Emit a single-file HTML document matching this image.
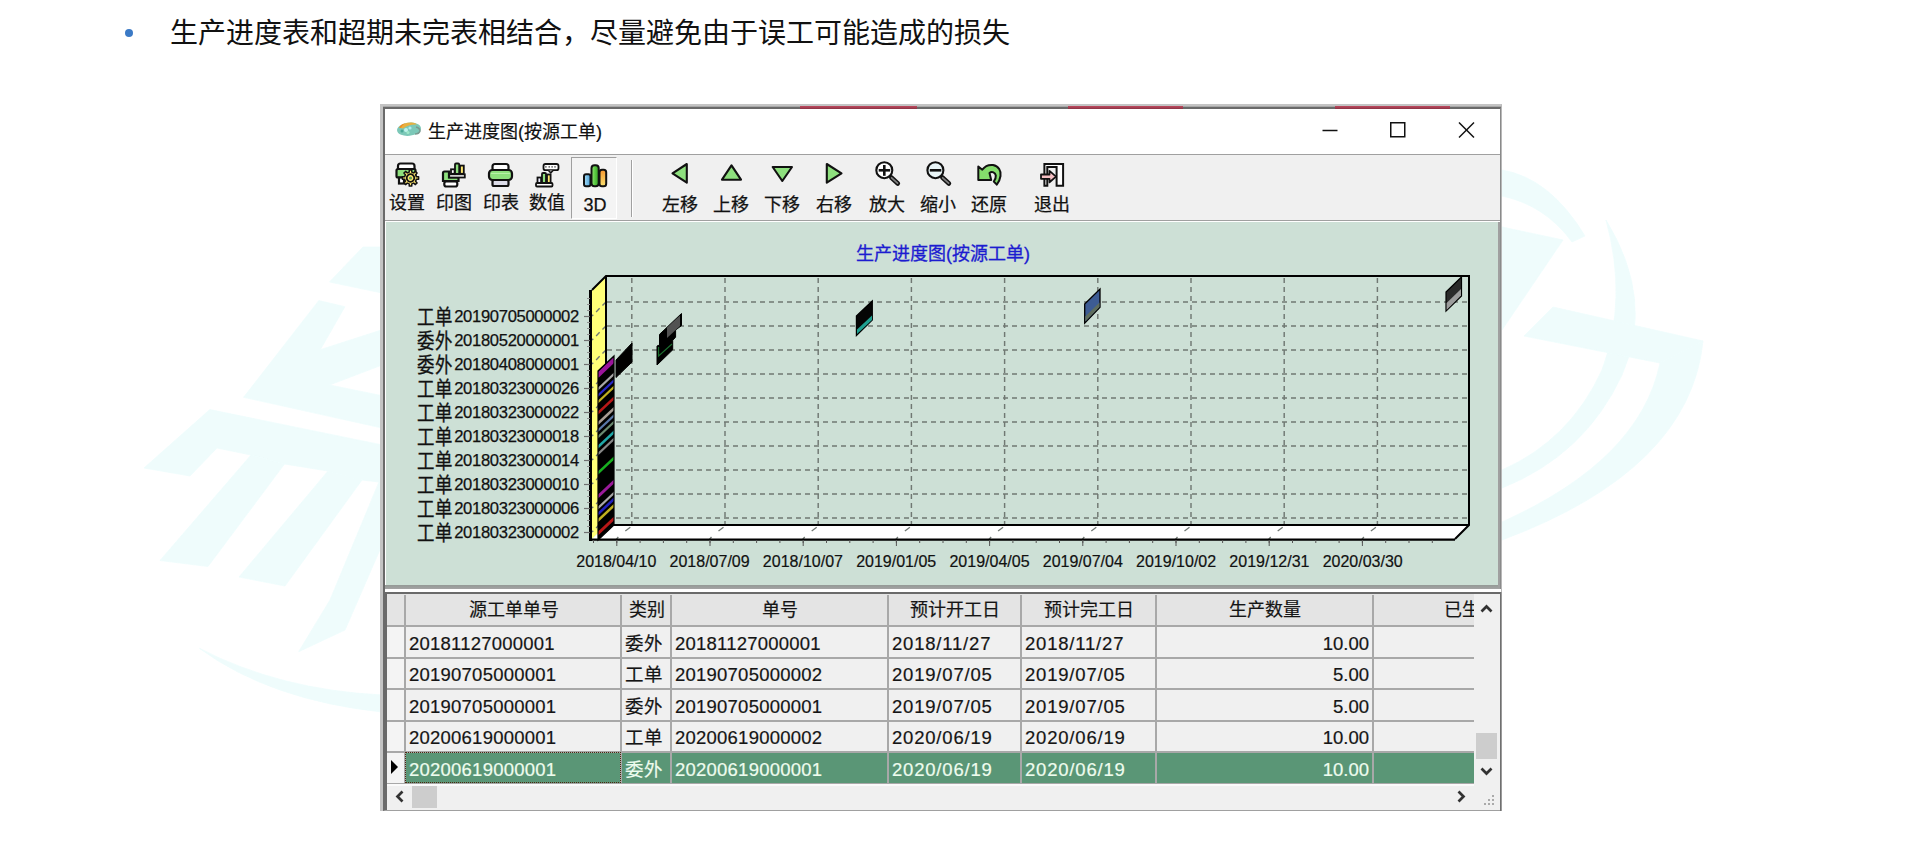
<!DOCTYPE html>
<html lang="zh-CN"><head><meta charset="utf-8">
<style>
*{margin:0;padding:0;box-sizing:border-box}
html,body{width:1920px;height:847px;overflow:hidden;background:#fff;font-family:"Liberation Sans",sans-serif;color:#000}
.a{position:absolute}
.nw{white-space:nowrap}
.bt{position:absolute;font-size:18px;line-height:20px;white-space:nowrap;color:#111;text-align:center;-webkit-text-stroke:0.25px #111}
.cell{position:absolute;font-size:18.5px;line-height:31px;white-space:nowrap;color:#151515;-webkit-text-stroke:0.2px #151515}
.hd{position:absolute;font-size:18px;line-height:31px;white-space:nowrap;color:#151515;text-align:center;-webkit-text-stroke:0.2px #151515}
</style></head><body>

<svg class="a" style="left:0;top:0" width="1920" height="847">
<g fill="#effcfc" stroke="#effcfc" stroke-width="0.8">
<path d="M329.5 282 L363 247 L382 247 L382 293 Z"/>
<path d="M243.6 397.3 L318.8 300.6 L344.9 306.7 L320.3 349.7 L382 329.8 L382 365 L329.5 385 L382 395.7 L382 428 Z"/>
<path d="M144 468 L209.8 409.6 L382 444.9 L382 483 L379 482 L362 480 L328 471 L284.5 464 L251 455 L217 448 L190 476 Z"/>
<path d="M251 455 L284.5 464 L208 566.5 L160 560.5 Z"/>
<path d="M328 471 L362 480 L285 586 L239 577 Z"/>
<path d="M379 482 L382 482.5 L382 545 L345 630 L298.7 651.7 L330 600 Z"/>
<path d="M199.5 648.4 Q280 690 382 695 L382 712 Q270 700 199.5 648.4 Z"/>
<path d="M1502 170 Q1550 178 1585 236 L1572 242 Q1545 205 1502 196 Z"/>
<path d="M1606 220 Q1655 300 1622 375 Q1585 455 1502 488 L1502 470 Q1570 440 1602 370 Q1628 300 1606 220 Z"/>
<path d="M1524 336 L1553 307 L1703 341 L1660 363 Z"/>
<path d="M1703 341 Q1690 470 1502 540 L1502 522 Q1640 460 1660 363 Z"/>
<path d="M1502 227 L1563 240 L1502 330 Z"/>
</g>
</svg>
<div class="a" style="left:125px;top:29px;width:8px;height:8px;border-radius:50%;background:#3b7ac6"></div>
<div class="a nw" style="left:170px;top:16px;font-size:28px;line-height:36px;color:#111">生产进度表和超期未完表相结合，尽量避免由于误工可能造成的损失</div>
<div class="a" style="left:380px;top:104px;width:1122px;height:707px;background:#fff;border-left:3px solid #c4c4c4;border-top:2px solid #c4c4c4;border-right:1px solid #b8b8b8"></div>
<div class="a" style="left:383px;top:106px;width:1118px;height:1px;background:#a8a8a8"></div>
<div class="a" style="left:383px;top:107px;width:1118px;height:704px;border-left:2px solid #6a6a6a;border-top:2px solid #6a6a6a;border-right:1px solid #8a8a8a;border-bottom:1px solid #a0a0a0"></div>
<div class="a" style="left:800px;top:106px;width:117px;height:3px;background:linear-gradient(#c04a60,#8a3444)"></div>
<div class="a" style="left:1068px;top:106px;width:115px;height:3px;background:linear-gradient(#c04a60,#8a3444)"></div>
<div class="a" style="left:1335px;top:106px;width:115px;height:3px;background:linear-gradient(#c04a60,#8a3444)"></div>
<svg class="a" style="left:395px;top:119px" width="30" height="22" viewBox="0 0 30 22">
<ellipse cx="14" cy="10.2" rx="12" ry="6.6" fill="#7cc8b8" transform="rotate(-6 14 10.2)"/>
<path d="M4 8.5 Q8 3.2 17 3.6 Q21 4 22 5.5 Q14 5 8 9.5 Z" fill="#e8b040"/>
<path d="M4 8.5 Q6 5 10 4.2 Q7 6.5 6 9 Z" fill="#f08a20"/>
<circle cx="11" cy="11" r="2" fill="#c0f4ec"/><circle cx="15" cy="9" r="1.6" fill="#b0ecf0"/>
<circle cx="13" cy="13.5" r="1.5" fill="#9ee8c8"/><circle cx="7" cy="12" r="1.5" fill="#4aa898"/>
<path d="M21 8 Q25 9 25 12 Q24 15 20 15" fill="none" stroke="#7a9a90" stroke-width="1.6"/>
</svg>
<div class="a nw" style="left:428px;top:121px;font-size:18px;line-height:22px;color:#111;-webkit-text-stroke:0.2px #111">生产进度图(按源工单)</div>
<svg class="a" style="left:1300px;top:110px" width="200" height="44">
<line x1="22.5" y1="20.5" x2="37.5" y2="20.5" stroke="#111" stroke-width="1.5"/>
<rect x="90.75" y="12.75" width="14" height="14" fill="none" stroke="#111" stroke-width="1.5"/>
<line x1="159" y1="12.5" x2="174" y2="27.5" stroke="#111" stroke-width="1.5"/>
<line x1="174" y1="12.5" x2="159" y2="27.5" stroke="#111" stroke-width="1.5"/>
</svg>
<div class="a" style="left:385px;top:154px;width:1115px;height:67px;background:#f0f0f0;border-top:1px solid #a0a0a0;border-bottom:1px solid #a0a0a0"></div>
<div class="a" style="left:571px;top:157px;width:46px;height:62px;background:#f4f4f4;border-left:1px solid #a0a0a0;border-top:1px solid #a0a0a0;border-right:1px solid #fff;border-bottom:1px solid #fff"></div>
<div class="a" style="left:631px;top:160px;width:1px;height:57px;background:#a0a0a0"></div>
<div class="a" style="left:632px;top:160px;width:1px;height:57px;background:#fff"></div>
<div class="bt" style="left:377px;top:193px;width:60px">设置</div>
<div class="bt" style="left:424px;top:193px;width:60px">印图</div>
<div class="bt" style="left:471px;top:193px;width:60px">印表</div>
<div class="bt" style="left:517px;top:193px;width:60px">数值</div>
<div class="bt" style="left:565px;top:195px;width:60px">3D</div>
<div class="bt" style="left:650px;top:195px;width:60px">左移</div>
<div class="bt" style="left:701px;top:195px;width:60px">上移</div>
<div class="bt" style="left:752px;top:195px;width:60px">下移</div>
<div class="bt" style="left:804px;top:195px;width:60px">右移</div>
<div class="bt" style="left:857px;top:195px;width:60px">放大</div>
<div class="bt" style="left:908px;top:195px;width:60px">缩小</div>
<div class="bt" style="left:959px;top:195px;width:60px">还原</div>
<div class="bt" style="left:1022px;top:195px;width:60px">退出</div>
<svg class="a" style="left:0;top:0" width="1100" height="230">
<path d="M398 169 V166 Q398 163.5 400.5 163.5 H412 Q414.5 163.5 414.5 166 V169" fill="#fff" stroke="#111" stroke-width="2.2"/>
<rect x="396.5" y="169" width="19" height="8.5" rx="1.5" fill="#8ee07e" stroke="#111" stroke-width="2.2"/>
<rect x="399" y="177.5" width="5" height="6" fill="#fff" stroke="#111" stroke-width="2.2"/>
<g transform="translate(410.5,178)">
<path d="M5.85 -1.34 L8.11 -1.20 L8.11 1.20 L5.85 1.34 L5.08 3.19 L6.59 4.88 L4.88 6.59 L3.19 5.08 L1.34 5.85 L1.20 8.11 L-1.20 8.11 L-1.34 5.85 L-3.19 5.08 L-4.88 6.59 L-6.59 4.88 L-5.08 3.19 L-5.85 1.34 L-8.11 1.20 L-8.11 -1.20 L-5.85 -1.34 L-5.08 -3.19 L-6.59 -4.88 L-4.88 -6.59 L-3.19 -5.08 L-1.34 -5.85 L-1.20 -8.11 L1.20 -8.11 L1.34 -5.85 L3.19 -5.08 L4.88 -6.59 L6.59 -4.88 L5.08 -3.19 Z" fill="#ffe870" stroke="#111" stroke-width="1.5" stroke-linejoin="round"/>
<circle r="3.8" fill="#ffe870" stroke="#111" stroke-width="1.8"/>
<circle r="1.6" fill="#5a9a5a"/>
</g>
<rect x="451" y="169.3" width="3.6" height="4.5" fill="#fff" stroke="#111" stroke-width="1.8"/>
<rect x="455" y="163.5" width="4.2" height="10.3" rx="1" fill="#8ee07e" stroke="#111" stroke-width="1.8"/>
<rect x="460" y="165.6" width="3.8" height="8.2" fill="#ffe870" stroke="#111" stroke-width="1.8"/>
<path d="M443 181 V173 Q443 171.5 444.5 171.5 H449 V177.5 H458.5 V181 Z" fill="#8ee07e" stroke="#111" stroke-width="2.2"/>
<rect x="449.2" y="174.3" width="15.6" height="3.2" fill="#fff" stroke="#111" stroke-width="1.8"/>
<rect x="444.3" y="181.5" width="13" height="5" rx="2" fill="#fff" stroke="#111" stroke-width="2.2"/>
<rect x="492.5" y="164" width="16" height="7" rx="2.5" fill="#fff" stroke="#111" stroke-width="2.2"/>
<rect x="489" y="170" width="23" height="10" rx="3.5" fill="#8ee07e" stroke="#111" stroke-width="2.2"/>
<line x1="491" y1="173.5" x2="510" y2="173.5" stroke="#b8f0a8" stroke-width="1"/>
<rect x="492.5" y="180" width="16" height="6" rx="1.5" fill="#dcdce8" stroke="#111" stroke-width="2.2"/>
<rect x="543.5" y="164" width="15" height="6.2" rx="2" fill="#fff" stroke="#111" stroke-width="1.8"/>
<path d="M548.5 170.5 L550.8 172.8 L553 170.5" fill="#fff" stroke="#111" stroke-width="1.6"/>
<g fill="#111"><rect x="545.3" y="166.3" width="1.2" height="1.2"/><rect x="548.6" y="166.3" width="1.2" height="1.2"/><rect x="551.5" y="166.3" width="1.2" height="1.2"/><rect x="554.4" y="166.3" width="1.2" height="1.2"/></g>
<rect x="537.5" y="177.5" width="3.6" height="5.5" fill="#eef" stroke="#111" stroke-width="1.8"/>
<rect x="542" y="173" width="4" height="10" rx="1" fill="#8ee07e" stroke="#111" stroke-width="1.8"/>
<rect x="547" y="174.5" width="3.6" height="8.5" fill="#ffe870" stroke="#111" stroke-width="1.8"/>
<rect x="536" y="183" width="16.5" height="3.5" rx="1" fill="#fff" stroke="#111" stroke-width="1.8"/>
<defs>
<linearGradient id="gb" x1="0" x2="1"><stop offset="0" stop-color="#a8dcf4"/><stop offset="1" stop-color="#4aa0d8"/></linearGradient>
<linearGradient id="gg" x1="0" x2="1"><stop offset="0" stop-color="#98e878"/><stop offset=".5" stop-color="#58c840"/><stop offset="1" stop-color="#38a028"/></linearGradient>
<linearGradient id="go" x1="0" x2="0" y1="0" y2="1"><stop offset="0" stop-color="#f89830"/><stop offset="1" stop-color="#f8e070"/></linearGradient>
</defs>
<rect x="584" y="174.3" width="6.5" height="12" rx="2" fill="url(#gb)" stroke="#111" stroke-width="2"/>
<rect x="591.5" y="165.2" width="7.2" height="21.1" rx="3" fill="url(#gg)" stroke="#111" stroke-width="2"/>
<rect x="599.5" y="169.8" width="6.7" height="16.5" rx="2.5" fill="url(#go)" stroke="#111" stroke-width="2"/>
<path d="M672.5 173.3 L686.8 164 V182.7 Z" fill="#8ee07e" stroke="#111" stroke-width="2.1" stroke-linejoin="round"/>
<path d="M731.5 165.3 L741 179.7 H722 Z" fill="#8ee07e" stroke="#111" stroke-width="2.1" stroke-linejoin="round"/>
<path d="M782.3 181 L792 167 H772.7 Z" fill="#8ee07e" stroke="#111" stroke-width="2.1" stroke-linejoin="round"/>
<path d="M841.5 173.3 L826.8 164 V182.7 Z" fill="#8ee07e" stroke="#111" stroke-width="2.1" stroke-linejoin="round"/>
<line x1="891.3" y1="177.5" x2="897.8" y2="183.5" stroke="#111" stroke-width="4.6" stroke-linecap="round"/>
<line x1="891.5999999999999" y1="177.8" x2="897.5" y2="183.2" stroke="#808080" stroke-width="1.8" stroke-linecap="round"/>
<circle cx="884.3" cy="170.2" r="8" fill="#fff" stroke="#111" stroke-width="2.1"/>
<rect x="878.6999999999999" y="169" width="11.5" height="2.6" fill="#111"/>
<rect x="883.0" y="165" width="2.6" height="10.8" fill="#111"/>
<line x1="942.4" y1="177.5" x2="948.9" y2="183.5" stroke="#111" stroke-width="4.6" stroke-linecap="round"/>
<line x1="942.6999999999999" y1="177.8" x2="948.6" y2="183.2" stroke="#808080" stroke-width="1.8" stroke-linecap="round"/>
<circle cx="935.4" cy="170.2" r="8" fill="#eaf6f8" stroke="#111" stroke-width="2.1"/>
<rect x="929.8" y="169" width="11.5" height="2.6" fill="#111"/>
<path d="M978.3 166.5 L982.3 169.7 C985 166 989 164.5 993 165 C998.5 166 1001.5 171 1000.5 176 C1000 179.5 998.5 182.5 996.8 184.6 L993.8 181.5 C995.3 179.5 996 177.5 995.8 175.5 C995.3 172.5 992 171 989.5 173 L991.2 180 H978.3 Z" fill="#84dc6c" stroke="#111" stroke-width="2" stroke-linejoin="round"/>
<path d="M1044.4 164.1 H1063.1 V185.7 H1056.6 V166.9 H1047.3 V185.7 H1044.4 Z" fill="#fff" stroke="#111" stroke-width="2" stroke-linejoin="miter"/>
<path d="M1041 174.5 H1049.5 V170.8 L1056 176.6 L1049.5 182.3 V178.8 H1041 Z" fill="#f6c0c4" stroke="#111" stroke-width="1.8" stroke-linejoin="round"/>
</svg>
<div class="a" style="left:385px;top:221px;width:1115px;height:368px;background:#fff"></div>
<div class="a" style="left:386px;top:222px;width:1113px;height:363px;background:#cde0d6"></div>
<div class="a" style="left:385px;top:585px;width:1115px;height:4px;background:linear-gradient(#949a96,#a4a4a4)"></div>
<div class="a" style="left:1498px;top:222px;width:2px;height:366px;background:#a0a0a0"></div>
<svg class="a" style="left:0;top:0" width="1920" height="847">
<text x="943" y="260" font-size="18" fill="#1c1cd0" text-anchor="middle" font-family="Liberation Sans" stroke="#1c1cd0" stroke-width="0.3">生产进度图(按源工单)</text>
<line x1="607" y1="302" x2="1468" y2="302" stroke="#707873" stroke-width="1.45" stroke-dasharray="5 4"/>
<line x1="607" y1="326" x2="1468" y2="326" stroke="#707873" stroke-width="1.45" stroke-dasharray="5 4"/>
<line x1="607" y1="350" x2="1468" y2="350" stroke="#707873" stroke-width="1.45" stroke-dasharray="5 4"/>
<line x1="607" y1="374" x2="1468" y2="374" stroke="#707873" stroke-width="1.45" stroke-dasharray="5 4"/>
<line x1="607" y1="398" x2="1468" y2="398" stroke="#707873" stroke-width="1.45" stroke-dasharray="5 4"/>
<line x1="607" y1="422" x2="1468" y2="422" stroke="#707873" stroke-width="1.45" stroke-dasharray="5 4"/>
<line x1="607" y1="446" x2="1468" y2="446" stroke="#707873" stroke-width="1.45" stroke-dasharray="5 4"/>
<line x1="607" y1="470" x2="1468" y2="470" stroke="#707873" stroke-width="1.45" stroke-dasharray="5 4"/>
<line x1="607" y1="494" x2="1468" y2="494" stroke="#707873" stroke-width="1.45" stroke-dasharray="5 4"/>
<line x1="607" y1="518" x2="1468" y2="518" stroke="#707873" stroke-width="1.45" stroke-dasharray="5 4"/>
<line x1="631.8" y1="278" x2="631.8" y2="525" stroke="#707873" stroke-width="1.45" stroke-dasharray="5 4"/>
<line x1="725.0" y1="278" x2="725.0" y2="525" stroke="#707873" stroke-width="1.45" stroke-dasharray="5 4"/>
<line x1="818.2" y1="278" x2="818.2" y2="525" stroke="#707873" stroke-width="1.45" stroke-dasharray="5 4"/>
<line x1="911.4" y1="278" x2="911.4" y2="525" stroke="#707873" stroke-width="1.45" stroke-dasharray="5 4"/>
<line x1="1004.6" y1="278" x2="1004.6" y2="525" stroke="#707873" stroke-width="1.45" stroke-dasharray="5 4"/>
<line x1="1097.8" y1="278" x2="1097.8" y2="525" stroke="#707873" stroke-width="1.45" stroke-dasharray="5 4"/>
<line x1="1191.0" y1="278" x2="1191.0" y2="525" stroke="#707873" stroke-width="1.45" stroke-dasharray="5 4"/>
<line x1="1284.2" y1="278" x2="1284.2" y2="525" stroke="#707873" stroke-width="1.45" stroke-dasharray="5 4"/>
<line x1="1377.4" y1="278" x2="1377.4" y2="525" stroke="#707873" stroke-width="1.45" stroke-dasharray="5 4"/>
<path d="M592 290 L606 276 L606 525 L592 539 Z" fill="#ffff78"/>
<line x1="606" y1="302" x2="592" y2="316" stroke="#707873" stroke-width="1.4" stroke-dasharray="5 4"/>
<line x1="606" y1="326" x2="592" y2="340" stroke="#707873" stroke-width="1.4" stroke-dasharray="5 4"/>
<line x1="606" y1="350" x2="592" y2="364" stroke="#707873" stroke-width="1.4" stroke-dasharray="5 4"/>
<line x1="606" y1="374" x2="592" y2="388" stroke="#707873" stroke-width="1.4" stroke-dasharray="5 4"/>
<line x1="606" y1="398" x2="592" y2="412" stroke="#707873" stroke-width="1.4" stroke-dasharray="5 4"/>
<line x1="606" y1="422" x2="592" y2="436" stroke="#707873" stroke-width="1.4" stroke-dasharray="5 4"/>
<line x1="606" y1="446" x2="592" y2="460" stroke="#707873" stroke-width="1.4" stroke-dasharray="5 4"/>
<line x1="606" y1="470" x2="592" y2="484" stroke="#707873" stroke-width="1.4" stroke-dasharray="5 4"/>
<line x1="606" y1="494" x2="592" y2="508" stroke="#707873" stroke-width="1.4" stroke-dasharray="5 4"/>
<line x1="606" y1="518" x2="592" y2="532" stroke="#707873" stroke-width="1.4" stroke-dasharray="5 4"/>
<path d="M592 539 L606 525 L1468 525 L1455 539 Z" fill="#fff"/>
<line x1="630.3" y1="527.3" x2="625.3" y2="531" stroke="#707873" stroke-width="1.3"/>
<line x1="618.3" y1="537" x2="615.8" y2="540" stroke="#707873" stroke-width="1.3"/>
<line x1="723.5" y1="527.3" x2="718.5" y2="531" stroke="#707873" stroke-width="1.3"/>
<line x1="711.5" y1="537" x2="709.0" y2="540" stroke="#707873" stroke-width="1.3"/>
<line x1="816.7" y1="527.3" x2="811.7" y2="531" stroke="#707873" stroke-width="1.3"/>
<line x1="804.7" y1="537" x2="802.2" y2="540" stroke="#707873" stroke-width="1.3"/>
<line x1="909.9" y1="527.3" x2="904.9" y2="531" stroke="#707873" stroke-width="1.3"/>
<line x1="897.9" y1="537" x2="895.4" y2="540" stroke="#707873" stroke-width="1.3"/>
<line x1="1003.1" y1="527.3" x2="998.1" y2="531" stroke="#707873" stroke-width="1.3"/>
<line x1="991.1" y1="537" x2="988.6" y2="540" stroke="#707873" stroke-width="1.3"/>
<line x1="1096.3" y1="527.3" x2="1091.3" y2="531" stroke="#707873" stroke-width="1.3"/>
<line x1="1084.3" y1="537" x2="1081.8" y2="540" stroke="#707873" stroke-width="1.3"/>
<line x1="1189.5" y1="527.3" x2="1184.5" y2="531" stroke="#707873" stroke-width="1.3"/>
<line x1="1177.5" y1="537" x2="1175.0" y2="540" stroke="#707873" stroke-width="1.3"/>
<line x1="1282.7" y1="527.3" x2="1277.7" y2="531" stroke="#707873" stroke-width="1.3"/>
<line x1="1270.7" y1="537" x2="1268.2" y2="540" stroke="#707873" stroke-width="1.3"/>
<line x1="1375.9" y1="527.3" x2="1370.9" y2="531" stroke="#707873" stroke-width="1.3"/>
<line x1="1363.9" y1="537" x2="1361.4" y2="540" stroke="#707873" stroke-width="1.3"/>
<path d="M592 290 L606 276 L1469 276 L1469 525 L1455 539" fill="none" stroke="#000" stroke-width="2"/>
<line x1="606" y1="276" x2="606" y2="525" stroke="#000" stroke-width="2"/>
<line x1="606" y1="525" x2="1469" y2="525" stroke="#000" stroke-width="2"/>
<line x1="589" y1="539.6" x2="1455" y2="539.6" stroke="#000" stroke-width="2.3"/>
<line x1="590.5" y1="290" x2="590.5" y2="541" stroke="#000" stroke-width="3"/>
<line x1="584" y1="316.5" x2="590" y2="316.5" stroke="#707070" stroke-width="1.2"/>
<line x1="587" y1="310.5" x2="590" y2="310.5" stroke="#909090" stroke-width="1"/>
<line x1="587" y1="304.5" x2="590" y2="304.5" stroke="#909090" stroke-width="1"/>
<line x1="587" y1="298.5" x2="590" y2="298.5" stroke="#909090" stroke-width="1"/>
<line x1="584" y1="340.5" x2="590" y2="340.5" stroke="#707070" stroke-width="1.2"/>
<line x1="587" y1="334.5" x2="590" y2="334.5" stroke="#909090" stroke-width="1"/>
<line x1="587" y1="328.5" x2="590" y2="328.5" stroke="#909090" stroke-width="1"/>
<line x1="587" y1="322.5" x2="590" y2="322.5" stroke="#909090" stroke-width="1"/>
<line x1="584" y1="364.5" x2="590" y2="364.5" stroke="#707070" stroke-width="1.2"/>
<line x1="587" y1="358.5" x2="590" y2="358.5" stroke="#909090" stroke-width="1"/>
<line x1="587" y1="352.5" x2="590" y2="352.5" stroke="#909090" stroke-width="1"/>
<line x1="587" y1="346.5" x2="590" y2="346.5" stroke="#909090" stroke-width="1"/>
<line x1="584" y1="388.5" x2="590" y2="388.5" stroke="#707070" stroke-width="1.2"/>
<line x1="587" y1="382.5" x2="590" y2="382.5" stroke="#909090" stroke-width="1"/>
<line x1="587" y1="376.5" x2="590" y2="376.5" stroke="#909090" stroke-width="1"/>
<line x1="587" y1="370.5" x2="590" y2="370.5" stroke="#909090" stroke-width="1"/>
<line x1="584" y1="412.5" x2="590" y2="412.5" stroke="#707070" stroke-width="1.2"/>
<line x1="587" y1="406.5" x2="590" y2="406.5" stroke="#909090" stroke-width="1"/>
<line x1="587" y1="400.5" x2="590" y2="400.5" stroke="#909090" stroke-width="1"/>
<line x1="587" y1="394.5" x2="590" y2="394.5" stroke="#909090" stroke-width="1"/>
<line x1="584" y1="436.5" x2="590" y2="436.5" stroke="#707070" stroke-width="1.2"/>
<line x1="587" y1="430.5" x2="590" y2="430.5" stroke="#909090" stroke-width="1"/>
<line x1="587" y1="424.5" x2="590" y2="424.5" stroke="#909090" stroke-width="1"/>
<line x1="587" y1="418.5" x2="590" y2="418.5" stroke="#909090" stroke-width="1"/>
<line x1="584" y1="460.5" x2="590" y2="460.5" stroke="#707070" stroke-width="1.2"/>
<line x1="587" y1="454.5" x2="590" y2="454.5" stroke="#909090" stroke-width="1"/>
<line x1="587" y1="448.5" x2="590" y2="448.5" stroke="#909090" stroke-width="1"/>
<line x1="587" y1="442.5" x2="590" y2="442.5" stroke="#909090" stroke-width="1"/>
<line x1="584" y1="484.5" x2="590" y2="484.5" stroke="#707070" stroke-width="1.2"/>
<line x1="587" y1="478.5" x2="590" y2="478.5" stroke="#909090" stroke-width="1"/>
<line x1="587" y1="472.5" x2="590" y2="472.5" stroke="#909090" stroke-width="1"/>
<line x1="587" y1="466.5" x2="590" y2="466.5" stroke="#909090" stroke-width="1"/>
<line x1="584" y1="508.5" x2="590" y2="508.5" stroke="#707070" stroke-width="1.2"/>
<line x1="587" y1="502.5" x2="590" y2="502.5" stroke="#909090" stroke-width="1"/>
<line x1="587" y1="496.5" x2="590" y2="496.5" stroke="#909090" stroke-width="1"/>
<line x1="587" y1="490.5" x2="590" y2="490.5" stroke="#909090" stroke-width="1"/>
<line x1="584" y1="532.5" x2="590" y2="532.5" stroke="#707070" stroke-width="1.2"/>
<line x1="587" y1="526.5" x2="590" y2="526.5" stroke="#909090" stroke-width="1"/>
<line x1="587" y1="520.5" x2="590" y2="520.5" stroke="#909090" stroke-width="1"/>
<line x1="587" y1="514.5" x2="590" y2="514.5" stroke="#909090" stroke-width="1"/>
<line x1="616.8" y1="540" x2="616.8" y2="546" stroke="#555" stroke-width="1"/>
<line x1="710.0" y1="540" x2="710.0" y2="546" stroke="#555" stroke-width="1"/>
<line x1="803.2" y1="540" x2="803.2" y2="546" stroke="#555" stroke-width="1"/>
<line x1="896.4" y1="540" x2="896.4" y2="546" stroke="#555" stroke-width="1"/>
<line x1="989.6" y1="540" x2="989.6" y2="546" stroke="#555" stroke-width="1"/>
<line x1="1082.8" y1="540" x2="1082.8" y2="546" stroke="#555" stroke-width="1"/>
<line x1="1176.0" y1="540" x2="1176.0" y2="546" stroke="#555" stroke-width="1"/>
<line x1="1269.2" y1="540" x2="1269.2" y2="546" stroke="#555" stroke-width="1"/>
<line x1="1362.4" y1="540" x2="1362.4" y2="546" stroke="#555" stroke-width="1"/>
<line x1="593.5" y1="540" x2="593.5" y2="543" stroke="#555" stroke-width="1"/>
<line x1="616.8" y1="540" x2="616.8" y2="543" stroke="#555" stroke-width="1"/>
<line x1="640.1" y1="540" x2="640.1" y2="543" stroke="#555" stroke-width="1"/>
<line x1="663.4" y1="540" x2="663.4" y2="543" stroke="#555" stroke-width="1"/>
<line x1="686.7" y1="540" x2="686.7" y2="543" stroke="#555" stroke-width="1"/>
<line x1="710.0" y1="540" x2="710.0" y2="543" stroke="#555" stroke-width="1"/>
<line x1="733.3" y1="540" x2="733.3" y2="543" stroke="#555" stroke-width="1"/>
<line x1="756.6" y1="540" x2="756.6" y2="543" stroke="#555" stroke-width="1"/>
<line x1="779.9" y1="540" x2="779.9" y2="543" stroke="#555" stroke-width="1"/>
<line x1="803.2" y1="540" x2="803.2" y2="543" stroke="#555" stroke-width="1"/>
<line x1="826.5" y1="540" x2="826.5" y2="543" stroke="#555" stroke-width="1"/>
<line x1="849.8" y1="540" x2="849.8" y2="543" stroke="#555" stroke-width="1"/>
<line x1="873.1" y1="540" x2="873.1" y2="543" stroke="#555" stroke-width="1"/>
<line x1="896.4" y1="540" x2="896.4" y2="543" stroke="#555" stroke-width="1"/>
<line x1="919.7" y1="540" x2="919.7" y2="543" stroke="#555" stroke-width="1"/>
<line x1="943.0" y1="540" x2="943.0" y2="543" stroke="#555" stroke-width="1"/>
<line x1="966.3" y1="540" x2="966.3" y2="543" stroke="#555" stroke-width="1"/>
<line x1="989.6" y1="540" x2="989.6" y2="543" stroke="#555" stroke-width="1"/>
<line x1="1012.9" y1="540" x2="1012.9" y2="543" stroke="#555" stroke-width="1"/>
<line x1="1036.2" y1="540" x2="1036.2" y2="543" stroke="#555" stroke-width="1"/>
<line x1="1059.5" y1="540" x2="1059.5" y2="543" stroke="#555" stroke-width="1"/>
<line x1="1082.8" y1="540" x2="1082.8" y2="543" stroke="#555" stroke-width="1"/>
<line x1="1106.1" y1="540" x2="1106.1" y2="543" stroke="#555" stroke-width="1"/>
<line x1="1129.4" y1="540" x2="1129.4" y2="543" stroke="#555" stroke-width="1"/>
<line x1="1152.7" y1="540" x2="1152.7" y2="543" stroke="#555" stroke-width="1"/>
<line x1="1176.0" y1="540" x2="1176.0" y2="543" stroke="#555" stroke-width="1"/>
<line x1="1199.3" y1="540" x2="1199.3" y2="543" stroke="#555" stroke-width="1"/>
<line x1="1222.6" y1="540" x2="1222.6" y2="543" stroke="#555" stroke-width="1"/>
<line x1="1245.9" y1="540" x2="1245.9" y2="543" stroke="#555" stroke-width="1"/>
<line x1="1269.2" y1="540" x2="1269.2" y2="543" stroke="#555" stroke-width="1"/>
<line x1="1292.5" y1="540" x2="1292.5" y2="543" stroke="#555" stroke-width="1"/>
<line x1="1315.8" y1="540" x2="1315.8" y2="543" stroke="#555" stroke-width="1"/>
<line x1="1339.1" y1="540" x2="1339.1" y2="543" stroke="#555" stroke-width="1"/>
<line x1="1362.4" y1="540" x2="1362.4" y2="543" stroke="#555" stroke-width="1"/>
<line x1="1385.7" y1="540" x2="1385.7" y2="543" stroke="#555" stroke-width="1"/>
<line x1="1409.0" y1="540" x2="1409.0" y2="543" stroke="#555" stroke-width="1"/>
<line x1="1432.3" y1="540" x2="1432.3" y2="543" stroke="#555" stroke-width="1"/>
<text x="454.2" y="322" font-size="16.6" fill="#111" stroke="#111" stroke-width="0.25" font-family="Liberation Sans" textLength="125" lengthAdjust="spacing">20190705000002</text>
<g transform="translate(0,308.9) scale(1,1.2) translate(0,-308.9)"><text x="417.5" y="321.1" font-size="17.4" fill="#111" stroke="#111" stroke-width="0.3" font-family="Liberation Sans" letter-spacing="0.6">工单</text></g>
<text x="454.2" y="346" font-size="16.6" fill="#111" stroke="#111" stroke-width="0.25" font-family="Liberation Sans" textLength="125" lengthAdjust="spacing">20180520000001</text>
<g transform="translate(0,332.9) scale(1,1.2) translate(0,-332.9)"><text x="417.5" y="345.1" font-size="17.4" fill="#111" stroke="#111" stroke-width="0.3" font-family="Liberation Sans" letter-spacing="0.6">委外</text></g>
<text x="454.2" y="370" font-size="16.6" fill="#111" stroke="#111" stroke-width="0.25" font-family="Liberation Sans" textLength="125" lengthAdjust="spacing">20180408000001</text>
<g transform="translate(0,356.9) scale(1,1.2) translate(0,-356.9)"><text x="417.5" y="369.1" font-size="17.4" fill="#111" stroke="#111" stroke-width="0.3" font-family="Liberation Sans" letter-spacing="0.6">委外</text></g>
<text x="454.2" y="394" font-size="16.6" fill="#111" stroke="#111" stroke-width="0.25" font-family="Liberation Sans" textLength="125" lengthAdjust="spacing">20180323000026</text>
<g transform="translate(0,380.9) scale(1,1.2) translate(0,-380.9)"><text x="417.5" y="393.1" font-size="17.4" fill="#111" stroke="#111" stroke-width="0.3" font-family="Liberation Sans" letter-spacing="0.6">工单</text></g>
<text x="454.2" y="418" font-size="16.6" fill="#111" stroke="#111" stroke-width="0.25" font-family="Liberation Sans" textLength="125" lengthAdjust="spacing">20180323000022</text>
<g transform="translate(0,404.9) scale(1,1.2) translate(0,-404.9)"><text x="417.5" y="417.1" font-size="17.4" fill="#111" stroke="#111" stroke-width="0.3" font-family="Liberation Sans" letter-spacing="0.6">工单</text></g>
<text x="454.2" y="442" font-size="16.6" fill="#111" stroke="#111" stroke-width="0.25" font-family="Liberation Sans" textLength="125" lengthAdjust="spacing">20180323000018</text>
<g transform="translate(0,428.9) scale(1,1.2) translate(0,-428.9)"><text x="417.5" y="441.1" font-size="17.4" fill="#111" stroke="#111" stroke-width="0.3" font-family="Liberation Sans" letter-spacing="0.6">工单</text></g>
<text x="454.2" y="466" font-size="16.6" fill="#111" stroke="#111" stroke-width="0.25" font-family="Liberation Sans" textLength="125" lengthAdjust="spacing">20180323000014</text>
<g transform="translate(0,452.9) scale(1,1.2) translate(0,-452.9)"><text x="417.5" y="465.1" font-size="17.4" fill="#111" stroke="#111" stroke-width="0.3" font-family="Liberation Sans" letter-spacing="0.6">工单</text></g>
<text x="454.2" y="490" font-size="16.6" fill="#111" stroke="#111" stroke-width="0.25" font-family="Liberation Sans" textLength="125" lengthAdjust="spacing">20180323000010</text>
<g transform="translate(0,476.9) scale(1,1.2) translate(0,-476.9)"><text x="417.5" y="489.1" font-size="17.4" fill="#111" stroke="#111" stroke-width="0.3" font-family="Liberation Sans" letter-spacing="0.6">工单</text></g>
<text x="454.2" y="514" font-size="16.6" fill="#111" stroke="#111" stroke-width="0.25" font-family="Liberation Sans" textLength="125" lengthAdjust="spacing">20180323000006</text>
<g transform="translate(0,500.9) scale(1,1.2) translate(0,-500.9)"><text x="417.5" y="513.1" font-size="17.4" fill="#111" stroke="#111" stroke-width="0.3" font-family="Liberation Sans" letter-spacing="0.6">工单</text></g>
<text x="454.2" y="538" font-size="16.6" fill="#111" stroke="#111" stroke-width="0.25" font-family="Liberation Sans" textLength="125" lengthAdjust="spacing">20180323000002</text>
<g transform="translate(0,524.9) scale(1,1.2) translate(0,-524.9)"><text x="417.5" y="537.1" font-size="17.4" fill="#111" stroke="#111" stroke-width="0.3" font-family="Liberation Sans" letter-spacing="0.6">工单</text></g>
<text x="616.3" y="566.5" font-size="16" fill="#111" stroke="#111" stroke-width="0.2" text-anchor="middle" font-family="Liberation Sans">2018/04/10</text>
<text x="709.6" y="566.5" font-size="16" fill="#111" stroke="#111" stroke-width="0.2" text-anchor="middle" font-family="Liberation Sans">2018/07/09</text>
<text x="802.9" y="566.5" font-size="16" fill="#111" stroke="#111" stroke-width="0.2" text-anchor="middle" font-family="Liberation Sans">2018/10/07</text>
<text x="896.2" y="566.5" font-size="16" fill="#111" stroke="#111" stroke-width="0.2" text-anchor="middle" font-family="Liberation Sans">2019/01/05</text>
<text x="989.5" y="566.5" font-size="16" fill="#111" stroke="#111" stroke-width="0.2" text-anchor="middle" font-family="Liberation Sans">2019/04/05</text>
<text x="1082.8" y="566.5" font-size="16" fill="#111" stroke="#111" stroke-width="0.2" text-anchor="middle" font-family="Liberation Sans">2019/07/04</text>
<text x="1176.1" y="566.5" font-size="16" fill="#111" stroke="#111" stroke-width="0.2" text-anchor="middle" font-family="Liberation Sans">2019/10/02</text>
<text x="1269.4" y="566.5" font-size="16" fill="#111" stroke="#111" stroke-width="0.2" text-anchor="middle" font-family="Liberation Sans">2019/12/31</text>
<text x="1362.7" y="566.5" font-size="16" fill="#111" stroke="#111" stroke-width="0.2" text-anchor="middle" font-family="Liberation Sans">2020/03/30</text>
<defs><clipPath id="bc"><path d="M598 371 L614 356 L614 525 L598 540 Z"/></clipPath></defs>
<path d="M598 371 L614 356 L614 525 L598 540 Z" fill="#000"/>
<g clip-path="url(#bc)">
<line x1="597" y1="376" x2="615" y2="359" stroke="#9a149a" stroke-width="4.50"/>
<line x1="597" y1="390" x2="615" y2="373" stroke="#a8a8a8" stroke-width="2.25"/>
<line x1="597" y1="396.5" x2="615" y2="379.5" stroke="#2828c8" stroke-width="2.25"/>
<line x1="597" y1="403" x2="615" y2="386" stroke="#c0b020" stroke-width="2.25"/>
<line x1="597" y1="414" x2="615" y2="397" stroke="#b81818" stroke-width="2.50"/>
<line x1="597" y1="424.5" x2="615" y2="407.5" stroke="#a89c94" stroke-width="2.50"/>
<line x1="597" y1="431.5" x2="615" y2="414.5" stroke="#5a78a8" stroke-width="2.25"/>
<line x1="597" y1="438" x2="615" y2="421" stroke="#6a8a70" stroke-width="2.25"/>
<line x1="597" y1="448" x2="615" y2="431" stroke="#20a8a8" stroke-width="2.50"/>
<line x1="597" y1="455" x2="615" y2="438" stroke="#888" stroke-width="2.25"/>
<line x1="597" y1="474" x2="615" y2="457" stroke="#18b020" stroke-width="2.50"/>
<line x1="597" y1="497.5" x2="615" y2="480.5" stroke="#9a1a9a" stroke-width="3.00"/>
<line x1="597" y1="509" x2="615" y2="492" stroke="#a8a8a8" stroke-width="2.25"/>
<line x1="597" y1="515" x2="615" y2="498" stroke="#2020c0" stroke-width="2.50"/>
<line x1="597" y1="521.5" x2="615" y2="504.5" stroke="#c0b020" stroke-width="2.50"/>
<line x1="597" y1="534.5" x2="615" y2="517.5" stroke="#b81818" stroke-width="3.00"/>
</g>
<path d="M598 371 L614 356 L614 525 L598 540 Z" fill="none" stroke="#000" stroke-width="1.2"/>
<path d="M616 360 L632 343 L632 362 L616 377.5 Z" fill="#000" stroke="#000" stroke-width="1"/>
<path d="M657 365 L657 346 L659.5 345 L659.5 334.4 L681.5 313.5 L681.5 325.6 L675.6 330 L675.6 337.3 L672.7 340.2 L672.7 349.8 Z" fill="#000" stroke="#000" stroke-width="1"/>
<path d="M667 338 L667 327.5 L680 315.5 L680 326 Z" fill="#525252"/>
<path d="M658.6 347 L658.6 356 L672 344" fill="none" stroke="#1c7030" stroke-width="1.1"/>
<path d="M856.4 316 L872.3 301 L872.3 320 L856.4 335.5 Z" fill="#050505" stroke="#000" stroke-width="1.2"/>
<path d="M857 329.5 L872 315.5 L872 320 L857 334 Z" fill="#1fa090"/>
<path d="M1084.7 304 L1100 289 L1100 307.3 L1084.7 323.2 Z" fill="#3d5c94" stroke="#000" stroke-width="1.3"/>
<path d="M1085.3 316.5 L1099.5 302.5 L1099.5 307 L1085.3 321.5 Z" fill="#5f6e5e"/>
<path d="M1446 292 L1461.5 277 L1461.5 296 L1446 311 Z" fill="#2a2a2a" stroke="#000" stroke-width="1.2"/>
<path d="M1446.6 303 L1461 289 L1461 295.5 L1446.6 310 Z" fill="#9c9c9c"/>
</svg>
<div class="a" style="left:385px;top:589px;width:1116px;height:222px;background:#fff"></div>
<div class="a" style="left:385px;top:592px;width:1116px;height:219px;background:#f0f0f0;border-left:2px solid #6a6a6a;border-top:2px solid #6a6a6a"></div>
<div class="a" style="left:387px;top:594px;width:1087px;height:32px;background:#e4e4e4"></div>
<div class="a" style="left:405px;top:752px;width:1069px;height:31px;background:#5a9676"></div>
<div class="a" style="left:387px;top:626px;width:17px;height:158px;background:#f4f4f4"></div>
<div class="a" style="left:387px;top:625px;width:1087px;height:2px;background:#a8a8a8"></div>
<div class="a" style="left:387px;top:657px;width:1087px;height:2px;background:#a8a8a8"></div>
<div class="a" style="left:387px;top:688px;width:1087px;height:2px;background:#a8a8a8"></div>
<div class="a" style="left:387px;top:720px;width:1087px;height:2px;background:#a8a8a8"></div>
<div class="a" style="left:387px;top:751px;width:1087px;height:2px;background:#a8a8a8"></div>
<div class="a" style="left:387px;top:783px;width:1087px;height:2px;background:#a8a8a8"></div>
<div class="a" style="left:404px;top:595px;width:2px;height:189px;background:#a8a8a8"></div>
<div class="a" style="left:620px;top:595px;width:2px;height:189px;background:#a8a8a8"></div>
<div class="a" style="left:670px;top:595px;width:2px;height:189px;background:#a8a8a8"></div>
<div class="a" style="left:887px;top:595px;width:2px;height:189px;background:#a8a8a8"></div>
<div class="a" style="left:1020px;top:595px;width:2px;height:189px;background:#a8a8a8"></div>
<div class="a" style="left:1155px;top:595px;width:2px;height:189px;background:#a8a8a8"></div>
<div class="a" style="left:1372px;top:595px;width:2px;height:189px;background:#a8a8a8"></div>
<div class="hd" style="left:406px;top:595px;width:215px">源工单单号</div>
<div class="hd" style="left:622px;top:595px;width:49px">类别</div>
<div class="hd" style="left:672px;top:595px;width:216px">单号</div>
<div class="hd" style="left:889px;top:595px;width:132px">预计开工日</div>
<div class="hd" style="left:1022px;top:595px;width:134px">预计完工日</div>
<div class="hd" style="left:1157px;top:595px;width:216px">生产数量</div>
<div class="a" style="left:1374px;top:595px;width:100px;height:31px;overflow:hidden"><div class="hd" style="left:70px;top:0;text-align:left">已生产数量</div></div>
<div class="cell" style="left:409px;top:628px;color:#151515;letter-spacing:0.23px;-webkit-text-stroke:0.2px #151515;">20181127000001</div>
<div class="cell" style="left:625px;top:628px;color:#151515;letter-spacing:0;-webkit-text-stroke:0.2px #151515;">委外</div>
<div class="cell" style="left:675px;top:628px;color:#151515;letter-spacing:0.23px;-webkit-text-stroke:0.2px #151515;">20181127000001</div>
<div class="cell" style="left:892px;top:628px;color:#151515;letter-spacing:0.8px;-webkit-text-stroke:0.2px #151515;">2018/11/27</div>
<div class="cell" style="left:1025px;top:628px;color:#151515;letter-spacing:0.8px;-webkit-text-stroke:0.2px #151515;">2018/11/27</div>
<div class="cell" style="left:1157px;top:628px;width:212px;text-align:right;color:#151515;-webkit-text-stroke:0.2px #151515;">10.00</div>
<div class="cell" style="left:409px;top:659px;color:#151515;letter-spacing:0.23px;-webkit-text-stroke:0.2px #151515;">20190705000001</div>
<div class="cell" style="left:625px;top:659px;color:#151515;letter-spacing:0;-webkit-text-stroke:0.2px #151515;">工单</div>
<div class="cell" style="left:675px;top:659px;color:#151515;letter-spacing:0.23px;-webkit-text-stroke:0.2px #151515;">20190705000002</div>
<div class="cell" style="left:892px;top:659px;color:#151515;letter-spacing:0.8px;-webkit-text-stroke:0.2px #151515;">2019/07/05</div>
<div class="cell" style="left:1025px;top:659px;color:#151515;letter-spacing:0.8px;-webkit-text-stroke:0.2px #151515;">2019/07/05</div>
<div class="cell" style="left:1157px;top:659px;width:212px;text-align:right;color:#151515;-webkit-text-stroke:0.2px #151515;">5.00</div>
<div class="cell" style="left:409px;top:691px;color:#151515;letter-spacing:0.23px;-webkit-text-stroke:0.2px #151515;">20190705000001</div>
<div class="cell" style="left:625px;top:691px;color:#151515;letter-spacing:0;-webkit-text-stroke:0.2px #151515;">委外</div>
<div class="cell" style="left:675px;top:691px;color:#151515;letter-spacing:0.23px;-webkit-text-stroke:0.2px #151515;">20190705000001</div>
<div class="cell" style="left:892px;top:691px;color:#151515;letter-spacing:0.8px;-webkit-text-stroke:0.2px #151515;">2019/07/05</div>
<div class="cell" style="left:1025px;top:691px;color:#151515;letter-spacing:0.8px;-webkit-text-stroke:0.2px #151515;">2019/07/05</div>
<div class="cell" style="left:1157px;top:691px;width:212px;text-align:right;color:#151515;-webkit-text-stroke:0.2px #151515;">5.00</div>
<div class="cell" style="left:409px;top:722px;color:#151515;letter-spacing:0.23px;-webkit-text-stroke:0.2px #151515;">20200619000001</div>
<div class="cell" style="left:625px;top:722px;color:#151515;letter-spacing:0;-webkit-text-stroke:0.2px #151515;">工单</div>
<div class="cell" style="left:675px;top:722px;color:#151515;letter-spacing:0.23px;-webkit-text-stroke:0.2px #151515;">20200619000002</div>
<div class="cell" style="left:892px;top:722px;color:#151515;letter-spacing:0.8px;-webkit-text-stroke:0.2px #151515;">2020/06/19</div>
<div class="cell" style="left:1025px;top:722px;color:#151515;letter-spacing:0.8px;-webkit-text-stroke:0.2px #151515;">2020/06/19</div>
<div class="cell" style="left:1157px;top:722px;width:212px;text-align:right;color:#151515;-webkit-text-stroke:0.2px #151515;">10.00</div>
<div class="cell" style="left:409px;top:754px;color:#eefcee;letter-spacing:0.23px;-webkit-text-stroke:0.2px #eefcee;">20200619000001</div>
<div class="cell" style="left:625px;top:754px;color:#eefcee;letter-spacing:0;-webkit-text-stroke:0.2px #eefcee;">委外</div>
<div class="cell" style="left:675px;top:754px;color:#eefcee;letter-spacing:0.23px;-webkit-text-stroke:0.2px #eefcee;">20200619000001</div>
<div class="cell" style="left:892px;top:754px;color:#eefcee;letter-spacing:0.8px;-webkit-text-stroke:0.2px #eefcee;">2020/06/19</div>
<div class="cell" style="left:1025px;top:754px;color:#eefcee;letter-spacing:0.8px;-webkit-text-stroke:0.2px #eefcee;">2020/06/19</div>
<div class="cell" style="left:1157px;top:754px;width:212px;text-align:right;color:#eefcee;-webkit-text-stroke:0.2px #eefcee;">10.00</div>
<div class="a" style="left:405px;top:752px;width:216px;height:31px;border:1.6px dotted #4a2a10"></div>
<svg class="a" style="left:389px;top:759px" width="12" height="16"><path d="M2 1L9 8L2 15z" fill="#000"/></svg>
<div class="a" style="left:1474px;top:595px;width:25px;height:189px;background:#f0f0f0"></div>
<div class="a" style="left:1476px;top:733px;width:21px;height:26px;background:#cdcdcd"></div>
<svg class="a" style="left:1474px;top:595px" width="25" height="189">
<path d="M7.5 16.5L12.5 11.5L17.5 16.5" fill="none" stroke="#333" stroke-width="2.7"/>
<path d="M7.5 173.5L12.5 178.5L17.5 173.5" fill="none" stroke="#333" stroke-width="2.7"/>
</svg>
<div class="a" style="left:387px;top:784px;width:1113px;height:26px;background:#f0f0f0"></div>
<div class="a" style="left:412px;top:786px;width:25px;height:22px;background:#cdcdcd"></div>
<svg class="a" style="left:387px;top:784px" width="1113" height="26">
<path d="M15.5 7.5L10.5 12.5L15.5 17.5" fill="none" stroke="#333" stroke-width="2.7"/>
<path d="M1071.5 7.5L1076.5 12.5L1071.5 17.5" fill="none" stroke="#333" stroke-width="2.7"/>
<g fill="#aaa"><rect x="1105" y="11" width="2" height="2"/><rect x="1101" y="15" width="2" height="2"/><rect x="1105" y="15" width="2" height="2"/><rect x="1097" y="19" width="2" height="2"/><rect x="1101" y="19" width="2" height="2"/><rect x="1105" y="19" width="2" height="2"/></g>
</svg>
<div class="a" style="left:385px;top:810px;width:1116px;height:1px;background:#a0a0a0"></div>
<div class="a" style="left:1500px;top:592px;width:2px;height:219px;background:linear-gradient(90deg,#5a5a5a,#b0b0b0)"></div>
<div class="a" style="left:387px;top:784px;width:1087px;height:2px;background:#fafafa"></div>
</body></html>
